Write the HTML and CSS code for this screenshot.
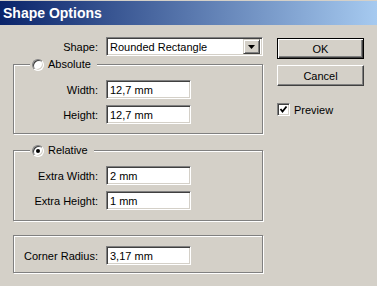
FILE: index.html
```html
<!DOCTYPE html>
<html lang="en">
<head>
    <meta charset="UTF-8">
    <meta name="viewport" content="width=device-width, initial-scale=1.0">
    <title>Shape Options</title>
    <link rel="stylesheet" href="styles.css">
</head>
<body>
    <div class="titlebar">Shape Options</div>

    <div class="content">
        <div class="main">
            <div class="row">
                <label class="label label-top">Shape:</label>
                <div class="select">
                    <span class="select-text">Rounded Rectangle</span>
                    <span class="select-btn">
                        <svg width="7" height="4" viewBox="0 0 7 4"><polygon points="0,0 7,0 3.5,4" fill="#000"/></svg>
                    </span>
                </div>
            </div>

            <fieldset class="group group-abs">
                <legend class="legend"><span class="radio"></span>Absolute</legend>
                <div class="row">
                    <label class="label">Width:</label>
                    <input class="field" type="text" value="12,7 mm">
                </div>
                <div class="row">
                    <label class="label">Height:</label>
                    <input class="field" type="text" value="12,7 mm">
                </div>
            </fieldset>

            <fieldset class="group group-rel">
                <legend class="legend"><span class="radio checked"></span>Relative</legend>
                <div class="row">
                    <label class="label">Extra Width:</label>
                    <input class="field" type="text" value="2 mm">
                </div>
                <div class="row">
                    <label class="label">Extra Height:</label>
                    <input class="field" type="text" value="1 mm">
                </div>
            </fieldset>

            <div class="group group-corner">
                <div class="row">
                    <label class="label">Corner Radius:</label>
                    <input class="field" type="text" value="3,17 mm">
                </div>
            </div>
        </div>

        <div class="side">
            <button class="btn btn-default">OK</button>
            <button class="btn">Cancel</button>
            <label class="check">
                <span class="checkbox">
                    <svg width="9" height="9" viewBox="0 0 9 9"><polyline points="1.5,4 3.5,6.5 7.5,1.5" fill="none" stroke="#000" stroke-width="1.8"/></svg>
                </span>
                Preview
            </label>
        </div>
    </div>
</body>
</html>
```

FILE: styles.css
```css
/* Reset default styles */
* {
    margin: 0;
    padding: 0;
    box-sizing: border-box;
}

body {
    font-family: 'Liberation Sans', Arial, sans-serif;
    font-size: 11px;
    color: #000;
    background: #d4d0c8;
    width: 377px;
    height: 286px;
    overflow: hidden;
}

.titlebar {
    margin-top: 1px;
    height: 24px;
    line-height: 24px;
    padding-left: 3px;
    color: #fff;
    font-size: 14px;
    font-weight: bold;
    background: linear-gradient(90deg, #0a246a, #a6caf0); /* Classic caption gradient */
}

.content {
    display: flex;
    padding: 12px 0 0 13px;
}

.main {
    width: 250px;
    display: flex;
    flex-direction: column;
}

.row {
    display: flex;
    align-items: center;
    gap: 8px;
    height: 19px;
}

.label {
    width: 84px;
    flex-shrink: 0;
    text-align: right;
}

.label-top {
    width: 85px;
}

/* Sunken 3D boxes */
.field, .select, .checkbox {
    background: #fff;
    border: 1px solid;
    border-color: #808080 #fff #fff #808080;
    box-shadow: inset 1px 1px #404040, inset -1px -1px #d4d0c8;
}

.field {
    width: 85px;
    height: 19px;
    padding: 0 2px 0 3px;
    font-family: inherit;
    font-size: 11px;
    color: #000;
    outline: none;
}

.select {
    width: 157px;
    height: 19px;
    display: flex;
    align-items: center;
    padding: 2px 2px 2px 3px;
}

.select-text {
    flex: 1;
}

.select-btn {
    width: 17px;
    height: 15px;
    display: flex;
    align-items: center;
    justify-content: center;
    background: #d4d0c8;
    border: 1px solid;
    border-color: #d4d0c8 #404040 #404040 #d4d0c8;
    box-shadow: inset 1px 1px #fff, inset -1px -1px #808080;
}

/* Etched group boxes */
.group {
    min-width: 0;
    border: 1px solid #808080;
    box-shadow: inset 1px 1px #fff, 1px 1px #fff;
    display: flex;
    flex-direction: column;
    gap: 6px;
}

.group-abs {
    margin-top: 2px;
    padding: 9px 0 9px;
}

.group-rel {
    margin-top: 10px;
    padding: 9px 0 10px;
}

.group-corner {
    margin-top: 14px;
    padding: 10px 0 7px;
}

.legend {
    margin-left: 16px;
    padding: 0 6px 0 2px;
    height: 13px;
    line-height: 13px;
    font-weight: normal;
    display: flex;
    align-items: center;
    gap: 4px;
    background: #d4d0c8;
}

.radio {
    position: relative;
    width: 12px;
    height: 12px;
    border-radius: 50%;
    background: #fff;
    border: 1px solid;
    border-color: #808080 #fff #fff #808080;
    box-shadow: inset 1px 1px #404040, inset -1px -1px #d4d0c8;
}

.radio.checked::after {
    content: '';
    position: absolute;
    left: 3px;
    top: 3px;
    width: 4px;
    height: 4px;
    border-radius: 50%;
    background: #000;
}

.side {
    margin-left: 14px;
    width: 87px;
    padding-top: 1px;
    display: flex;
    flex-direction: column;
    gap: 6px;
}

.btn {
    width: 87px;
    height: 21px;
    font-family: inherit;
    font-size: 11px;
    color: #000;
    background: #d4d0c8;
    border: 1px solid;
    border-color: #fff #404040 #404040 #fff;
    box-shadow: inset -1px -1px #808080;
}

.btn-default {
    border-color: #000;
    box-shadow: inset 1px 1px #fff, inset -1px -1px #404040, inset -2px -2px #808080;
}

.check {
    margin-top: 11px;
    display: flex;
    align-items: center;
    gap: 4px;
}

.checkbox {
    width: 13px;
    height: 13px;
    display: flex;
    align-items: center;
    justify-content: center;
}
```
